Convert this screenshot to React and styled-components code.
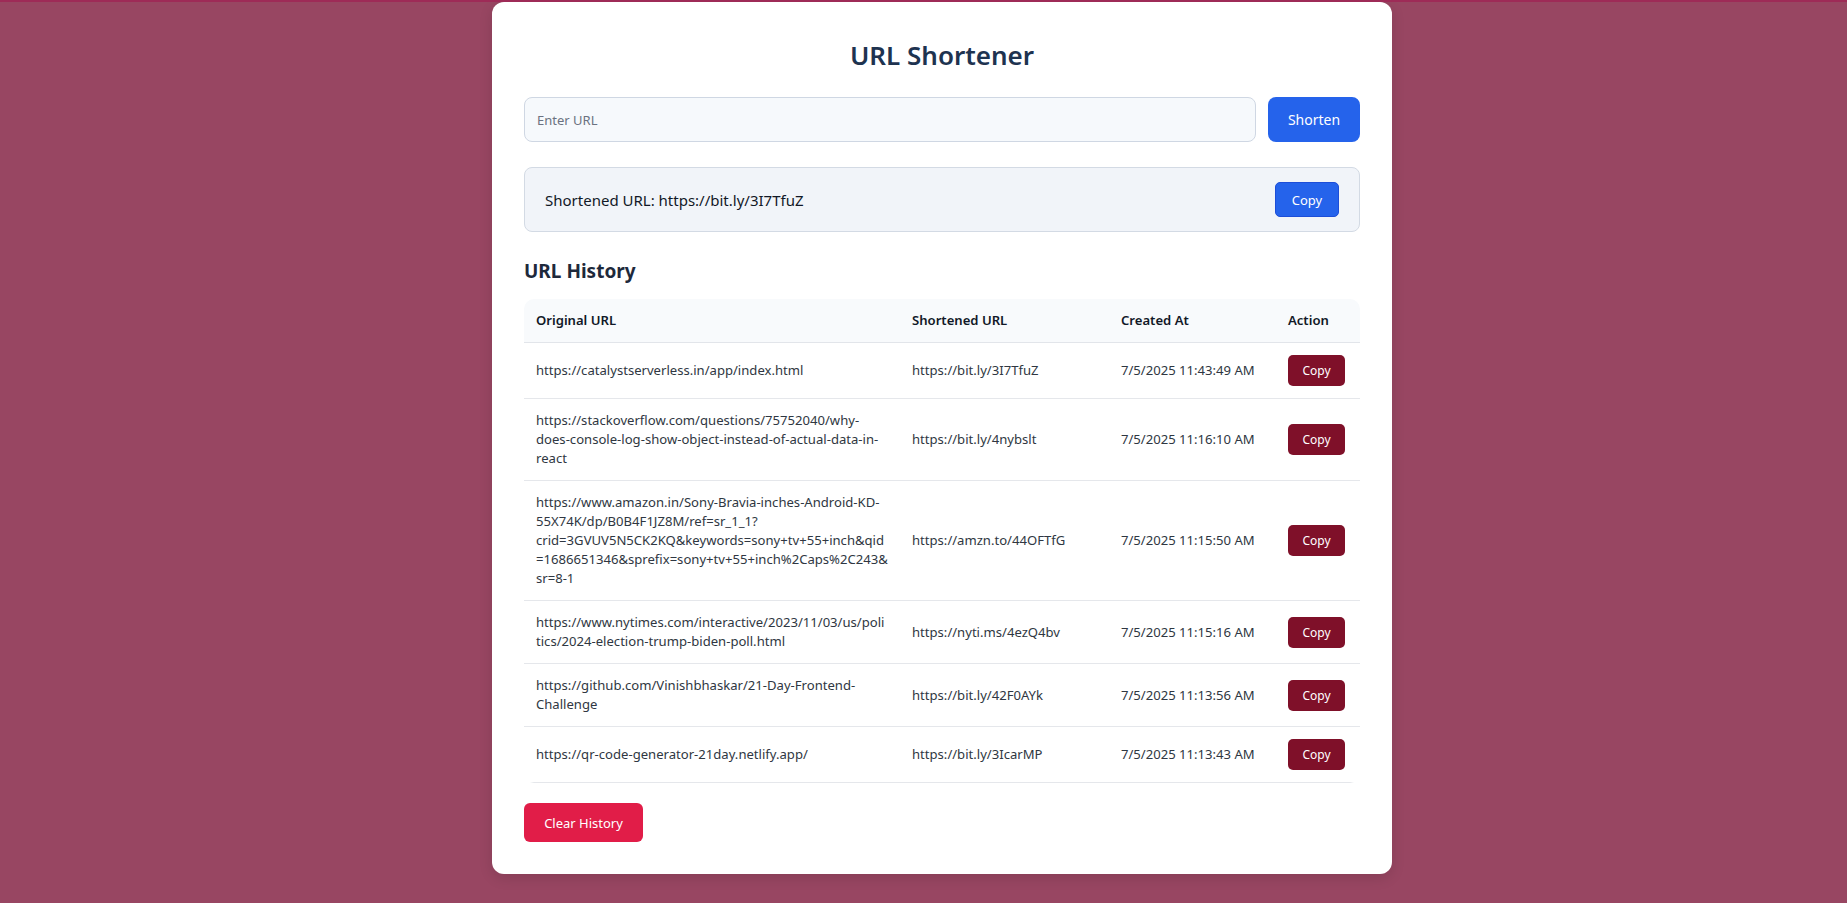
import React from 'react';
import styled, { createGlobalStyle } from 'styled-components';

const GlobalStyle = createGlobalStyle`
  * { box-sizing: border-box; }
  body {
    margin: 0;
    background: #984662;
    border-top: 2px solid #9e2b57;
    font-family: "Noto Sans", "Open Sans", sans-serif;
  }
`;

const Page = styled.div`
  min-height: calc(100vh - 2px);
  display: flex;
  justify-content: center;
  align-items: flex-start;
  padding-left: 37px;
  padding-bottom: 30px;
`;

const Card = styled.div`
  width: 900px;
  background: #ffffff;
  border-radius: 12px;
  padding: 34px 32px 32px;
  box-shadow: 0 4px 14px rgba(0, 0, 0, 0.12);
`;

const Title = styled.h1`
  margin: 0 0 23px;
  text-align: center;
  font-size: 26px;
  line-height: 38px;
  font-weight: 600;
  color: #1e3350;
`;

const InputRow = styled.div`
  display: flex;
  gap: 12px;
`;

const UrlInput = styled.input`
  flex: 1;
  height: 45px;
  padding: 0 12px;
  font-family: inherit;
  font-size: 13px;
  color: #1f2937;
  background: #f6f9fc;
  border: 1px solid #cfd7e3;
  border-radius: 8px;
  outline: none;
  &::placeholder { color: #6b7280; }
`;

const Button = styled.button`
  font-family: inherit;
  color: #ffffff;
  border: none;
  cursor: pointer;
  background: ${p => p.$bg};
  font-size: ${p => p.$size || 13}px;
  width: ${p => p.$w}px;
  height: ${p => p.$h}px;
  border-radius: ${p => p.$r || 6}px;
  padding: 0;
`;

const ResultBox = styled.div`
  margin-top: 25px;
  height: 65px;
  display: flex;
  align-items: center;
  justify-content: space-between;
  padding: 0 20px;
  background: #f1f4f9;
  border: 1px solid #d3dae4;
  border-radius: 8px;
  font-size: 15px;
  color: #111827;
`;

const SectionTitle = styled.h2`
  margin: 26px 0 14px;
  font-size: 19px;
  line-height: 27px;
  font-weight: 700;
  color: #1e293b;
`;

const TableWrap = styled.div`
  border-radius: 10px;
  overflow: hidden;
`;

const Table = styled.table`
  width: 100%;
  border-collapse: collapse;
  table-layout: fixed;
  font-size: 13.1px;
  line-height: 19px;
`;

const Th = styled.th`
  width: ${p => p.$w}px;
  text-align: left;
  font-weight: 600;
  color: #111827;
  background: #f8fafc;
  padding: 12px;
  border-bottom: 1px solid #e2e5ea;
`;

const Td = styled.td`
  padding: 12px;
  color: #2f3742;
  vertical-align: middle;
  word-break: break-word;
  border-bottom: 1px solid #e5e7eb;
`;

const Footer = styled.div`
  margin-top: 20px;
`;

const history = [
  ['https://catalystserverless.in/app/index.html', 'https://bit.ly/3I7TfuZ', '7/5/2025 11:43:49 AM'],
  ['https://stackoverflow.com/questions/75752040/why-does-console-log-show-object-instead-of-actual-data-in-react', 'https://bit.ly/4nybslt', '7/5/2025 11:16:10 AM'],
  ['https://www.amazon.in/Sony-Bravia-inches-Android-KD-55X74K/dp/B0B4F1JZ8M/ref=sr_1_1?crid=3GVUV5N5CK2KQ&keywords=sony+tv+55+inch&qid=1686651346&sprefix=sony+tv+55+inch%2Caps%2C243&sr=8-1', 'https://amzn.to/44OFTfG', '7/5/2025 11:15:50 AM'],
  ['https://www.nytimes.com/interactive/2023/11/03/us/politics/2024-election-trump-biden-poll.html', 'https://nyti.ms/4ezQ4bv', '7/5/2025 11:15:16 AM'],
  ['https://github.com/Vinishbhaskar/21-Day-Frontend-Challenge', 'https://bit.ly/42F0AYk', '7/5/2025 11:13:56 AM'],
  ['https://qr-code-generator-21day.netlify.app/', 'https://bit.ly/3IcarMP', '7/5/2025 11:13:43 AM'],
];

export default function App() {
  return (
    <>
      <GlobalStyle />
      <Page>
        <Card>
          <Title>URL Shortener</Title>
          <InputRow>
            <UrlInput placeholder="Enter URL" />
            <Button $bg="#2563eb" $size={14} $w={92} $h={45} $r={8}>Shorten</Button>
          </InputRow>
          <ResultBox>
            <span>Shortened URL: https://bit.ly/3I7TfuZ</span>
            <Button $bg="#2563eb" $w={64} $h={35} $r={5} style={{ border: '1px solid #1d4ed8' }}>Copy</Button>
          </ResultBox>
          <SectionTitle>URL History</SectionTitle>
          <TableWrap>
            <Table>
              <thead>
                <tr>
                  <Th $w={376}>Original URL</Th>
                  <Th $w={209}>Shortened URL</Th>
                  <Th $w={167}>Created At</Th>
                  <Th $w={84}>Action</Th>
                </tr>
              </thead>
              <tbody>
                {history.map(([orig, short, date]) => (
                  <tr key={short}>
                    <Td>{orig}</Td>
                    <Td>{short}</Td>
                    <Td>{date}</Td>
                    <Td>
                      <Button $bg="#7f1029" $size={12} $w={57} $h={31} $r={5}>Copy</Button>
                    </Td>
                  </tr>
                ))}
              </tbody>
            </Table>
          </TableWrap>
          <Footer>
            <Button $bg="#e11d48" $w={119} $h={39} $r={6}>Clear History</Button>
          </Footer>
        </Card>
      </Page>
    </>
  );
}
